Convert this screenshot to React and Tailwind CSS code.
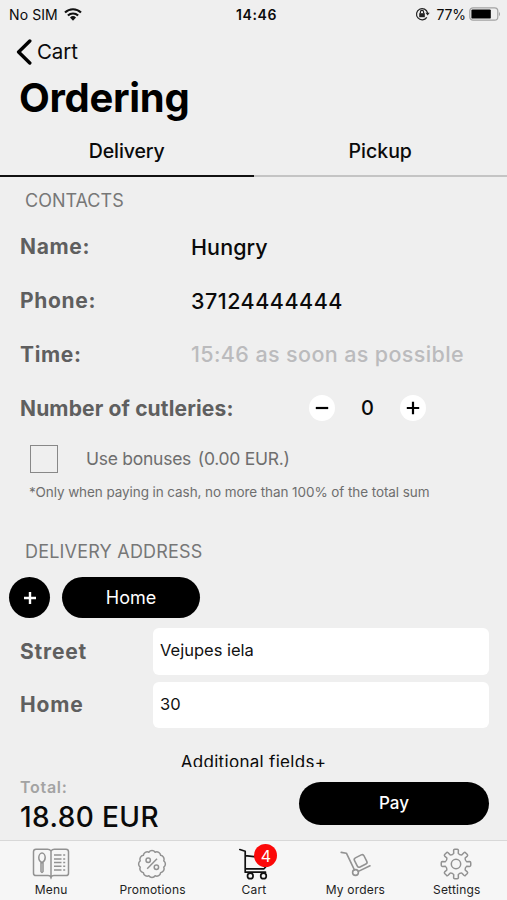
import React from 'react';

const polar = (r, deg) => {
    const a = (deg * Math.PI) / 180;
    return `${(16 + r * Math.sin(a)).toFixed(2)} ${(16 - r * Math.cos(a)).toFixed(2)}`;
};

// Eight squared teeth round a ring
const gearPath = Array.from({ length: 8 }, (_, i) => {
    const c = i * 45;
    return `${i === 0 ? 'M' : 'L'}${polar(10.9, c - 12)} L${polar(13.8, c - 10)} Q${polar(14.9, c - 9)} ${polar(14.8, c - 5)} L${polar(14.8, c + 5)} Q${polar(14.9, c + 9)} ${polar(13.8, c + 10)} L${polar(10.9, c + 12)} Q${polar(9.6, c + 22.5)} ${polar(10.9, c + 33)}`;
}).join(' ') + 'Z';

// Badge with twelve bumps
const sealPath = `M${polar(12.2, -15)} ` + Array.from({ length: 12 }, (_, i) => (
    `A3.9 3.9 0 0 1 ${polar(12.2, i * 30 + 15)}`
)).join(' ') + 'Z';

const MenuIcon = () => (
    <svg width="38" height="32" viewBox="0 0 38 32" fill="none" stroke="#929292" strokeWidth="1.5">
        <path d="M19 3C18 1.5 17 1.2 15.5 1.2H4Q1.5 1.2 1.5 3.8V25.2Q1.5 27.6 4 27.6H16Q18.3 27.6 19 29.5Q19.7 27.6 22 27.6H34Q36.5 27.6 36.5 25.2V3.8Q36.5 1.2 34 1.2H22.5C21 1.2 20 1.5 19 3V30.5" />
        <path d="M10 14.6C7.6 13.6 6.8 11.5 6.8 9.6C6.8 7 8.4 5 10 5S13.2 7 13.2 9.6C13.2 11.5 12.4 13.6 10 14.6ZM9 14.5V23.5Q10 25.3 11 23.5V14.5" />
        <path d="M22 7H29.5M22 11H29.5M22 14.5H29.5M22 18.2H29.5M22 22H29.5" />
        <path d="M31.2 7H33.2M31.2 11H33.2M31.2 14.5H33.2M31.2 18.2H33.2M31.2 22H33.2" />
    </svg>
);

const PromoIcon = () => (
    <svg width="32" height="32" viewBox="0 0 32 32" fill="none" stroke="#929292" strokeWidth="1.5" strokeLinejoin="round">
        <path d={sealPath} />
        <circle cx="12.2" cy="12.3" r="2.2" />
        <circle cx="20.4" cy="19.2" r="2.2" />
        <path d="M21 10.8L11.2 20.8" />
    </svg>
);

const CartIcon = () => (
    <svg width="32" height="32" viewBox="0 0 32 32" fill="none" stroke="#111" strokeWidth="1.7" strokeLinecap="round" strokeLinejoin="round">
        <path d="M2.8 1.5L8.2 3.3V24.2H28.5M8.2 7.6L20 9M8.2 20.8H27L29.5 18" />
        <circle cx="13.3" cy="27.9" r="2.8" />
        <circle cx="26.5" cy="27.9" r="2.8" />
    </svg>
);

const OrdersIcon = () => (
    <svg width="32" height="32" viewBox="0 0 32 32" fill="none" stroke="#929292" strokeWidth="1.6" strokeLinecap="round" strokeLinejoin="round">
        <path d="M2.2 4.4L7.4 5.2L15.4 21.8M19.4 23.4L31 17.8" />
        <circle cx="16.5" cy="24.5" r="2.9" />
        <rect x="16.4" y="7.8" width="10.6" height="10.2" rx="2" transform="rotate(-27 21.7 13)" />
    </svg>
);

const GearIcon = () => (
    <svg width="32" height="32" viewBox="0 0 32 32" fill="none" stroke="#929292" strokeWidth="1.5" strokeLinejoin="round">
        <path d={gearPath} />
        <circle cx="16" cy="16" r="4.7" />
    </svg>
);

const StatusBar = () => (
    <div className="h-7 grid grid-cols-3 items-center pl-[9px] pr-[6px] text-[14px]">
        <div className="flex items-center gap-[6px]">
            <span className="tracking-[0.1px]">No SIM</span>
            <svg width="18" height="13" viewBox="0 0 18 13" fill="none" stroke="#111" strokeWidth="2.1">
                <path d="M1 4.6A11.4 11.4 0 0 1 17 4.6M3.9 7.6A7.2 7.2 0 0 1 14.1 7.6" />
                <path d="M6 9.5A4.3 4.3 0 0 1 12 9.5L9 12.7Z" fill="#111" stroke="none" />
            </svg>
        </div>
        <span className="pl-[3px] text-center font-semibold tracking-[0.6px]">14:46</span>
        <div className="flex items-center justify-end">
            <svg width="15" height="14" viewBox="0 0 15 14" fill="none" stroke="#222" strokeWidth="1.2">
                <path d="M11.8 10.3A5.6 5.6 0 1 1 12.6 6" />
                <path d="M10.5 5.8H14.7L12.6 8.6Z" fill="#222" stroke="none" />
                <rect x="4.2" y="6.2" width="5.6" height="4" fill="#222" stroke="none" />
                <path d="M5.4 6.5V5A1.6 1.6 0 0 1 8.6 5V6.5" />
            </svg>
            <span className="ml-[6px] mr-[3px] tracking-[-0.1px]">77%</span>
            <svg width="32" height="14" viewBox="0 0 32 14">
                <rect x="0.8" y="0.8" width="28" height="12.4" rx="3.2" fill="none" stroke="#a3a3a3" strokeWidth="1.2" />
                <rect x="2.4" y="2.4" width="19.4" height="9.2" rx="1.2" fill="#000" />
                <path d="M30 4.7Q32 7 30 9.3Z" fill="#a3a3a3" />
            </svg>
        </div>
    </div>
);

const Row = ({ label, labelClass = 'tracking-[0.65px]', children }) => (
    <div className="h-[53.8px] flex items-center">
        <span className={`w-[171px] shrink-0 whitespace-nowrap text-[21px] font-bold text-[#5f5f5f] ${labelClass}`}>{label}</span>
        {children}
    </div>
);

const Field = ({ label, value }) => (
    <div className="h-[46.5px] flex items-center">
        <span className="w-[133px] shrink-0 text-[21px] font-bold tracking-[0.8px] text-[#5f5f5f]">{label}</span>
        <div className="flex-1 h-full rounded-md bg-white pl-[7px] pb-[2px] flex items-center text-[16.5px] text-[#111]">{value}</div>
    </div>
);

const Stepper = ({ plus }) => (
    <button className="w-[26px] h-[26px] rounded-full bg-white flex items-center justify-center">
        <svg width="14" height="14" viewBox="0 0 14 14" stroke="#000" strokeWidth="2.2">
            <path d={plus ? 'M0.8 7H13.2M7 0.8V13.2' : 'M0.8 7H13.2'} />
        </svg>
    </button>
);

const tabs = [
    { label: 'Menu', icon: MenuIcon },
    { label: 'Promotions', icon: PromoIcon },
    { label: 'Cart', icon: CartIcon, badge: 4 },
    { label: 'My orders', icon: OrdersIcon },
    { label: 'Settings', icon: GearIcon },
];

const TabBar = () => (
    <nav className="h-[60px] shrink-0 border-t border-[#d8d8d8] bg-[#f6f6f6] grid grid-cols-5">
        {tabs.map(({ label, icon: Icon, badge }) => (
            <div key={label} className="flex flex-col items-center pt-[7px]">
                <div className="relative">
                    <Icon />
                    {badge && (
                        <span className="absolute left-[17px] -top-[4px] w-[23px] h-[23px] rounded-full bg-[#fb0808] text-white text-[16px] flex items-center justify-center">
                            {badge}
                        </span>
                    )}
                </div>
                <span className="mt-[3px] pl-px text-[12px] leading-[14px] tracking-[0.2px] text-[#222] whitespace-nowrap">{label}</span>
            </div>
        ))}
    </nav>
);

const App = () => (
    <div className="w-full h-[900px] overflow-hidden bg-[#efefef] text-[#0a0a0a] flex flex-col font-['Inter',sans-serif]">
        <StatusBar />
        <div className="h-12 shrink-0 flex items-center gap-[5px] pl-4">
            <svg width="16" height="26" viewBox="0 0 16 26" fill="none" stroke="#000" strokeWidth="3.4" strokeLinecap="round" strokeLinejoin="round">
                <path d="M13.8 2L2.6 13L13.8 24" />
            </svg>
            <span className="text-[20.5px] tracking-[-0.1px]">Cart</span>
        </div>
        <h1 className="h-[46px] shrink-0 pl-[19px] text-[40px] leading-[44px] font-bold tracking-[-0.3px] text-black">Ordering</h1>
        <div className="h-[55px] shrink-0 flex text-center text-[19.5px] leading-[59px] font-medium">
            <div className="w-1/2 h-full border-b-2 border-[#111] tracking-[-0.1px]">Delivery</div>
            <div className="w-1/2 h-full border-b-2 border-[#c4c4c4]">Pickup</div>
        </div>

        <main className="h-[590px] shrink-0 overflow-hidden flex flex-col">
            <h2 className="h-[43px] shrink-0 pl-[25px] text-[18px] leading-[48px] text-[#777]">CONTACTS</h2>
            <div className="pl-5">
                <Row label="Name:"><span className="text-[21.5px] font-medium tracking-[0.1px]">Hungry</span></Row>
                <Row label="Phone:"><span className="text-[21.5px] font-medium tracking-[0.5px]">37124444444</span></Row>
                <Row label="Time:"><span className="text-[21.5px] text-[#bbbbbd] font-medium tracking-[0.38px]">15:46 as soon as possible</span></Row>
                <Row label="Number of cutleries:" labelClass="tracking-[0.14px]">
                    <div className="ml-[118px] w-[117px] flex items-center justify-between">
                        <Stepper />
                        <span className="text-[20px] font-medium">0</span>
                        <Stepper plus />
                    </div>
                </Row>
            </div>
            <div className="mt-[10px] pl-[30px] flex items-center">
                <div className="w-[28px] h-[28px] border border-[#888]" />
                <span className="ml-[28px] text-[17.5px] tracking-[-0.26px] text-[#6e6e6e]">Use bonuses <span className="ml-[2px]">(0.00 EUR.)</span></span>
            </div>
            <p className="mt-[10px] pl-[29px] text-[13.5px] leading-[18px] tracking-[-0.08px] text-[#6e6e6e]">*Only when paying in cash, no more than 100% of the total sum</p>
            <h2 className="mt-[40px] pl-[25px] text-[18px] leading-[22px] tracking-[0.2px] text-[#777]">DELIVERY ADDRESS</h2>
            <div className="mt-[14px] pl-[9px] flex gap-3">
                <button className="w-[41px] h-[41px] rounded-full bg-black flex items-center justify-center">
                    <svg width="12" height="12" viewBox="0 0 12 12" stroke="#fff" strokeWidth="2.4">
                        <path d="M0 6H12M6 0V12" />
                    </svg>
                </button>
                <button className="w-[138px] h-[41px] rounded-full bg-black text-white text-[18px]">Home</button>
            </div>
            <div className="mt-[10px] pl-5 pr-[18px] flex flex-col gap-[7px]">
                <Field label="Street" value="Vejupes iela" />
                <Field label="Home" value="30" />
            </div>
            <div className="mt-[23px] shrink-0 text-center text-[17px] leading-[22px] tracking-[0.3px]">Additional fields+</div>
        </main>

        <div className="flex-1 flex justify-between pl-5 pr-[18px]">
            <div className="pt-[10px]">
                <div className="text-[16px] leading-[20px] font-semibold tracking-[0.7px] text-[#a3a3a3]">Total:</div>
                <div className="text-[28px] leading-[41px] font-medium tracking-[0.4px]">18.80 EUR</div>
            </div>
            <button className="mt-[15px] w-[190px] h-[43px] rounded-full bg-black text-white text-[17px] font-medium">Pay</button>
        </div>
        <TabBar />
    </div>
);

export default App;
